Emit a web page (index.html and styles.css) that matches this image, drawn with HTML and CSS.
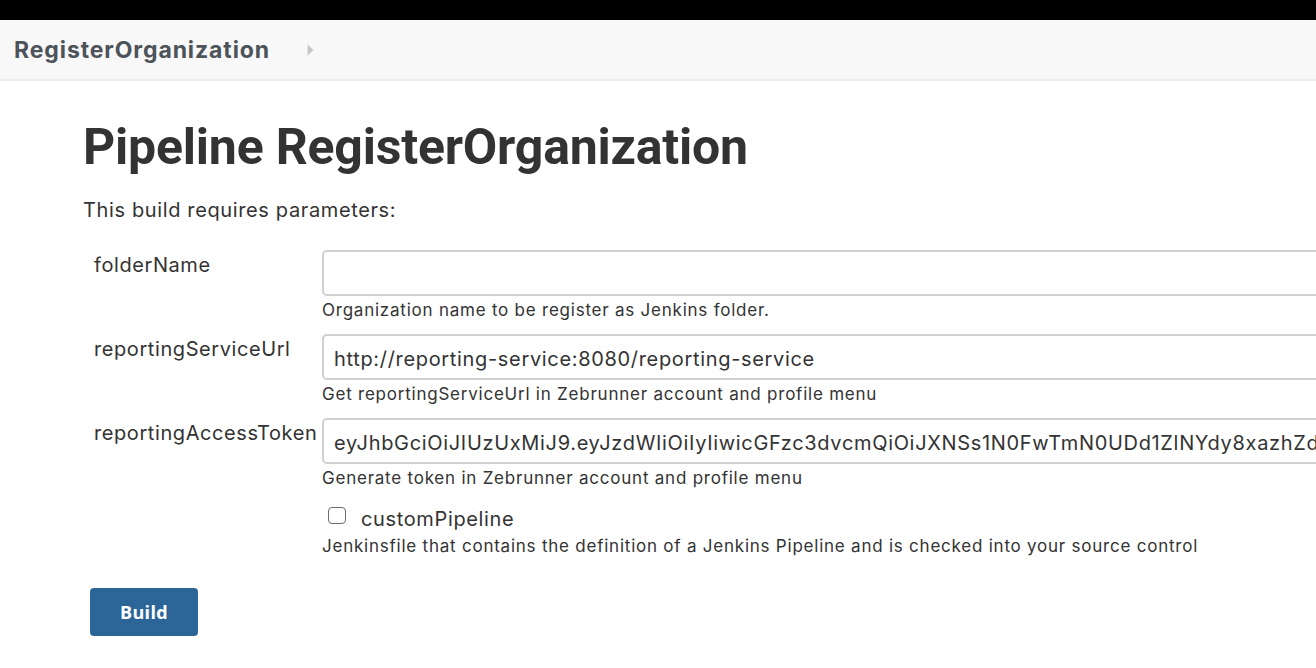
FILE: index.html
```html
<!DOCTYPE html>
<html>
<head>
<meta charset="utf-8">
<link rel="stylesheet" href="styles.css">
</head>
<body>
<div class="topbar"></div>
<div class="breadcrumbs">
  <span class="crumb">RegisterOrganization</span>
  <svg class="arrow" width="7" height="14" viewBox="0 0 7 14"><path d="M0.5 1.5 L6.5 7 L0.5 12.5 Z" fill="#c4c6c8"/></svg>
</div>
<main class="main">
  <h1 class="title">Pipeline RegisterOrganization</h1>
  <p class="intro">This build requires parameters:</p>
  <div class="params">
    <div class="row">
      <div class="label">folderName</div>
      <div class="field">
        <input class="text" type="text" value="">
        <div class="help">Organization name to be register as Jenkins folder.</div>
      </div>
    </div>
    <div class="row">
      <div class="label">reportingServiceUrl</div>
      <div class="field">
        <input class="text" type="text" value="http://reporting-service:8080/reporting-service">
        <div class="help">Get reportingServiceUrl in Zebrunner account and profile menu</div>
      </div>
    </div>
    <div class="row">
      <div class="label">reportingAccessToken</div>
      <div class="field">
        <input class="text" type="text" value="eyJhbGciOiJIUzUxMiJ9.eyJzdWIiOiIyIiwicGFzc3dvcmQiOiJXNSs1N0FwTmN0UDd1ZlNYdy8xazhZdGxkQWZx">
        <div class="help">Generate token in Zebrunner account and profile menu</div>
      </div>
    </div>
    <div class="row">
      <div class="label"></div>
      <div class="field">
        <label class="check"><span class="box"></span><span class="check-text">customPipeline</span></label>
        <div class="help">Jenkinsfile that contains the definition of a Jenkins Pipeline and is checked into your source control</div>
      </div>
    </div>
  </div>
  <button class="build">Build</button>
</main>
</body>
</html>
```
FILE: styles.css
```css
html, body {
  margin: 0;
  padding: 0;
  background: #fff;
  overflow: hidden;
  width: 1316px;
  height: 668px;
}
body {
  font-family: "Inter", "Roboto", sans-serif;
  color: #333;
}
.topbar {
  height: 20px;
  background: #000;
}
.breadcrumbs {
  height: 61px;
  background: #f8f8f8;
  border-bottom: 2px solid #e8ecef;
  box-sizing: border-box;
  display: flex;
  align-items: center;
  padding-left: 14px;
}
.crumb {
  font-family: "Inter", sans-serif;
  font-weight: 700;
  font-size: 23px;
  color: #4c535b;
  letter-spacing: 0.9px;
}
.arrow {
  margin-left: 37px;
}
.main {
  padding-left: 83px;
  padding-top: 1px;
}
.title {
  font-family: "Roboto", sans-serif;
  font-weight: 700;
  font-size: 50px;
  margin: 37px 0 0 0;
  line-height: 56px;
  color: #333;
  letter-spacing: -0.2px;
}
.intro {
  font-family: "Inter", sans-serif;
  font-size: 20px;
  margin: 22px 0 0 0;
  line-height: 26px;
  color: #333;
  letter-spacing: 0.63px;
}
.params {
  margin-top: 27px;
  margin-left: 7px;
  display: flex;
  flex-direction: column;
  gap: 10px;
}
.row {
  display: flex;
}
.label {
  width: 232px;
  flex: none;
  box-sizing: border-box;
  padding-left: 4px;
  padding-top: 2px;
  font-family: "Inter", sans-serif;
  font-size: 20px;
  line-height: 26px;
  color: #333;
  letter-spacing: 0.58px;
}
.field {
  flex: none;
  width: 1100px;
}
.text {
  display: block;
  width: 1100px;
  height: 46px;
  box-sizing: border-box;
  border: 2px solid #d0d0d0;
  border-radius: 5px;
  padding: 3px 10px 0 10px;
  font-family: "Inter", sans-serif;
  font-size: 20px;
  letter-spacing: 0.67px;
  color: #333;
  background: #fff;
  outline: none;
  margin: 0;
}
.help {
  font-family: "Inter", sans-serif;
  font-size: 17px;
  line-height: 28px;
  color: #333;
  letter-spacing: 0.77px;
}
.check {
  display: flex;
  align-items: center;
  height: 30px;
  padding-left: 6px;
  font-family: "Inter", sans-serif;
  font-size: 20px;
  letter-spacing: 0.64px;
  color: #333;
}
.check-text {
  padding-top: 3px;
}
.box {
  width: 18px;
  height: 17px;
  box-sizing: border-box;
  border: 1.5px solid #6a6a6a;
  border-radius: 4px;
  margin-right: 15px;
  margin-top: -4px;
  background: #fff;
}
.build {
  margin-top: 28px;
  margin-left: 7px;
  width: 108px;
  height: 48px;
  background: #2c6699;
  border: none;
  border-radius: 4px;
  color: #fff;
  font-family: "Open Sans", sans-serif;
  font-weight: 700;
  font-size: 18px;
  letter-spacing: 0.3px;
}
```
